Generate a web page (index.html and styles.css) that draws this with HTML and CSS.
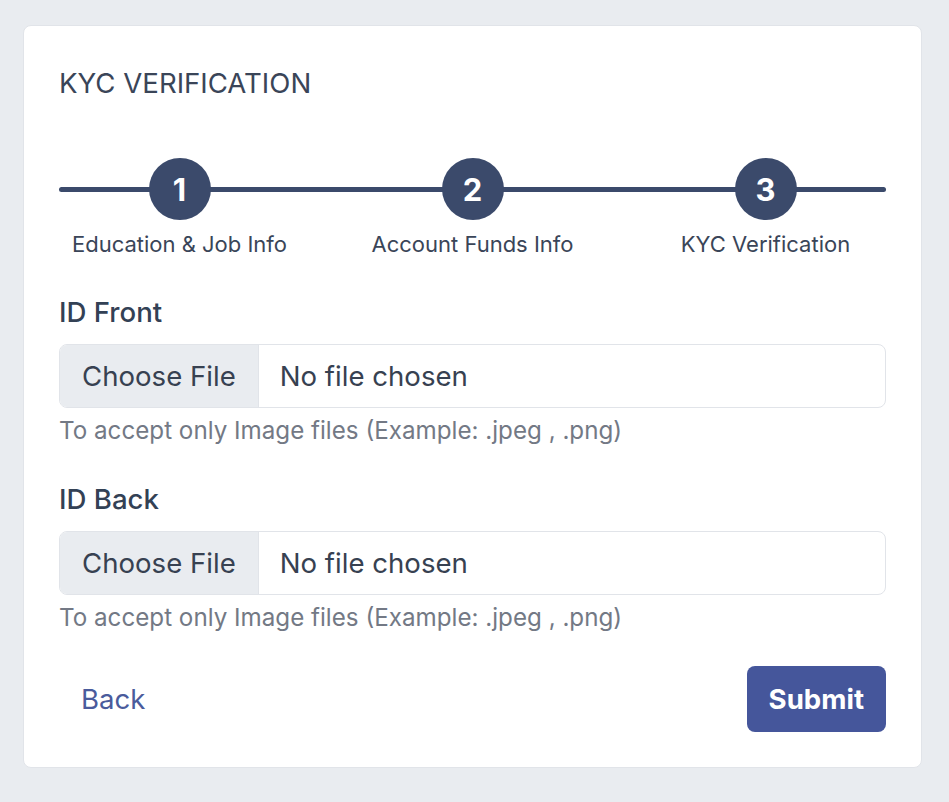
FILE: index.html
```html
<!DOCTYPE html>
<html lang="en">
  <head>
    <meta charset="UTF-8" />
    <meta name="viewport" content="width=device-width, initial-scale=1.0" />
    <title>KYC Verification</title>
    <link rel="stylesheet" href="styles.css">
  </head>
  <body>
    <div class="card">
      <h2 class="title">KYC VERIFICATION</h2>

      <div class="stepper">
        <div class="step">
          <span class="circle">1</span>
          <span class="step-label">Education &amp; Job Info</span>
        </div>
        <div class="step">
          <span class="circle">2</span>
          <span class="step-label">Account Funds Info</span>
        </div>
        <div class="step">
          <span class="circle">3</span>
          <span class="step-label">KYC Verification</span>
        </div>
      </div>

      <form class="kyc-form">
        <div class="field">
          <label for="idFront">ID Front</label>
          <input type="file" id="idFront" accept="image/*" />
          <p class="hint">To accept only Image files (Example: .jpeg , .png)</p>
        </div>
        <div class="field">
          <label for="idBack">ID Back</label>
          <input type="file" id="idBack" accept="image/*" />
          <p class="hint">To accept only Image files (Example: .jpeg , .png)</p>
        </div>
        <div class="actions">
          <button type="button" class="btn-back">Back</button>
          <button type="submit" class="btn-submit">Submit</button>
        </div>
      </form>
    </div>
  </body>
</html>
```

FILE: styles.css
```css
body {
  font-family: Inter, "Noto Sans", sans-serif;
  background-color: #e9ecf0;
  margin: 0;
  padding: 25px 27px 0 23px;
  color: #374151;
}
.card {
  background: #fff;
  border: 1px solid #e1e4e9;
  border-radius: 8px;
  padding: 41px 35px 35px 35px;
}
.title {
  margin: 0;
  font-size: 27.6px;
  line-height: 32px;
  font-weight: 400;
  color: #3a4558;
}
.stepper {
  position: relative;
  display: grid;
  grid-template-columns: repeat(3, 1fr);
  margin: 59px -26px 0;
}
.stepper::before {
  content: "";
  position: absolute;
  left: 26px;
  right: 26px;
  top: 29px;
  height: 5px;
  border-radius: 3px;
  background-color: #3b4a6b;
}
.step {
  position: relative;
  display: flex;
  flex-direction: column;
  align-items: center;
  gap: 10px;
}
.circle {
  width: 62px;
  height: 62px;
  border-radius: 50%;
  background-color: #3b4a6b;
  color: #fff;
  font-size: 31px;
  font-weight: 700;
  display: flex;
  align-items: center;
  justify-content: center;
}
.step-label {
  font-size: 22px;
  line-height: 28px;
  color: #3a4558;
}
.kyc-form {
  margin-top: 38px;
}
.field {
  margin-bottom: 38px;
}
.field label {
  display: block;
  font-size: 27.6px;
  line-height: 32px;
  font-weight: 500;
  color: #334155;
  margin-bottom: 16px;
}
.field input[type="file"] {
  display: block;
  width: 100%;
  box-sizing: border-box;
  height: 64px;
  padding: 0;
  border: 1px solid #e1e4e9;
  border-radius: 8px;
  font-family: inherit;
  font-size: 27.6px;
  color: #374151;
  overflow: hidden;
}
.field input[type="file"]::file-selector-button {
  height: 62px;
  margin: 0 21px 0 0;
  padding: 0 22px;
  border: none;
  border-right: 1px solid #e1e4e9;
  background-color: #e9ecf0;
  font-family: inherit;
  font-size: 27.6px;
  color: #374151;
}
.hint {
  margin: 9px 0 0;
  font-size: 24.2px;
  line-height: 28px;
  color: #737985;
}
.actions {
  display: flex;
  justify-content: space-between;
  align-items: center;
  margin-top: -4px;
}
.btn-back {
  background: none;
  border: none;
  padding: 0 22px;
  font-family: inherit;
  font-size: 27.6px;
  color: #4a5b9c;
}
.btn-submit {
  height: 66px;
  padding: 0 22px;
  border: none;
  border-radius: 8px;
  background-color: #45569b;
  color: #fff;
  font-family: inherit;
  font-size: 27.6px;
  font-weight: 700;
}
```
